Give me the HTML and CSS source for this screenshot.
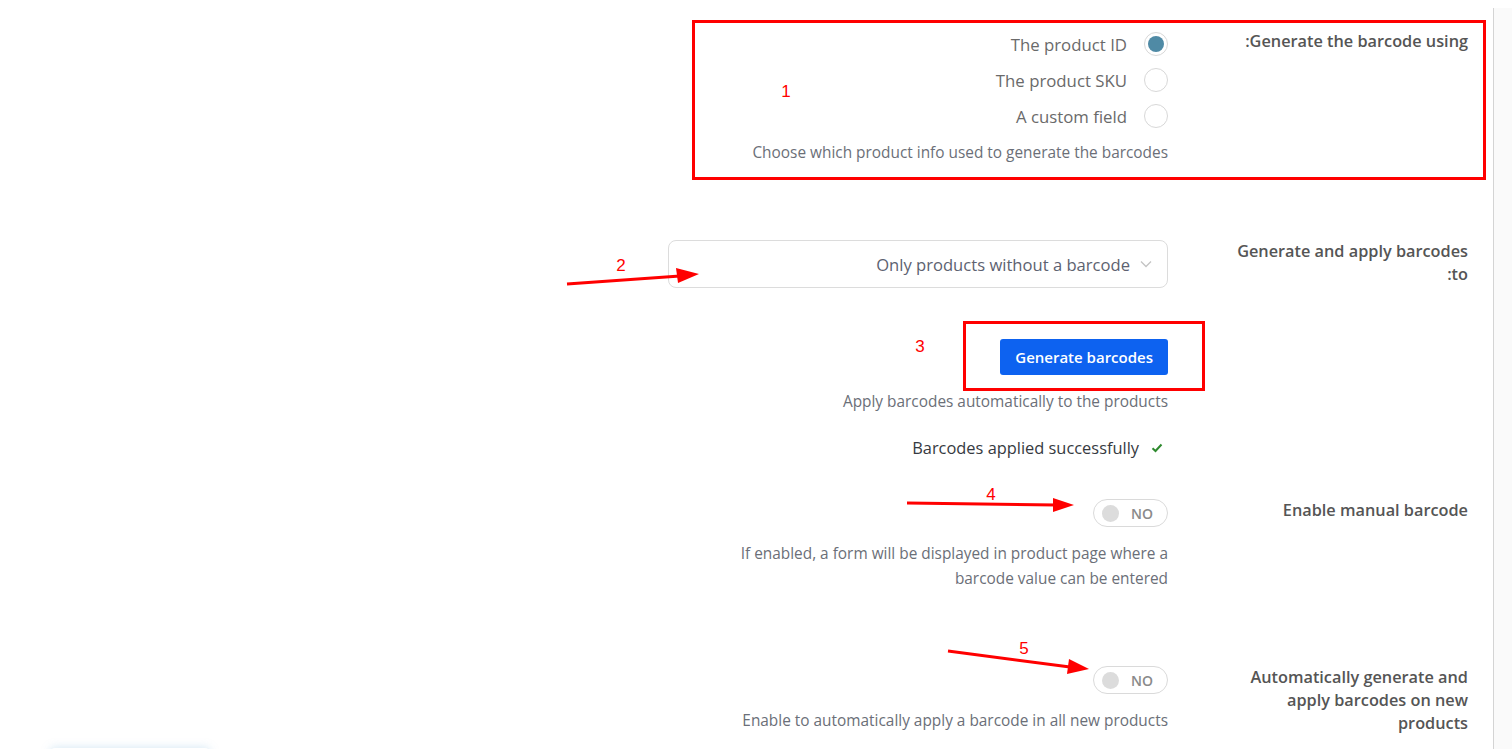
FILE: index.html
```html
<!DOCTYPE html>
<html lang="en">
<head>
  <meta charset="UTF-8">
  <meta name="viewport" content="width=device-width, initial-scale=1.0">
  <title>Barcode settings</title>
  <link rel="stylesheet" href="styles.css">
</head>
<body>
  <div class="page">
    <form class="form" dir="rtl">

      <!-- 1: source of the barcode -->
      <div class="row row-source">
        <div class="label label-top">Generate the barcode using:</div>
        <div class="control">
          <div class="radios">
            <label class="radio"><span class="dot checked"></span><span class="radio-text">The product ID</span></label>
            <label class="radio"><span class="dot"></span><span class="radio-text">The product SKU</span></label>
            <label class="radio"><span class="dot"></span><span class="radio-text">A custom field</span></label>
          </div>
          <p class="help help-first">Choose which product info used to generate the barcodes</p>
        </div>
      </div>

      <!-- 2: which products -->
      <div class="row row-apply">
        <div class="label">Generate and apply barcodes to:</div>
        <div class="control">
          <div class="select">
            <svg class="chevron" width="12" height="8" viewBox="0 0 12 8"><path d="M1 1.5 L6 6.5 L11 1.5" fill="none" stroke="#c4c4c4" stroke-width="1.3"/></svg>
            <span>Only products without a barcode</span>
          </div>
        </div>
      </div>

      <!-- 3: button -->
      <div class="row row-button">
        <div class="label"></div>
        <div class="control">
          <button type="button" class="btn">Generate barcodes</button>
          <p class="help help-btn">Apply barcodes automatically to the products</p>
          <div class="success">
            <svg class="check" width="12" height="10" viewBox="0 0 12 10"><path d="M1.5 5.2 L4.5 8 L10.5 1.5" fill="none" stroke="#2f8a2f" stroke-width="2"/></svg>
            <span>Barcodes applied successfully</span>
          </div>
        </div>
      </div>

      <!-- 4: manual barcode -->
      <div class="row row-manual">
        <div class="label">Enable manual barcode</div>
        <div class="control">
          <div class="switch"><span class="knob"></span><span class="switch-text">NO</span></div>
          <p class="help help-switch">If enabled, a form will be displayed in product page where a barcode value can be entered</p>
        </div>
      </div>

      <!-- 5: auto barcode -->
      <div class="row row-auto">
        <div class="label">Automatically generate and apply barcodes on new products</div>
        <div class="control">
          <div class="switch"><span class="knob"></span><span class="switch-text">NO</span></div>
          <p class="help help-switch">Enable to automatically apply a barcode in all new products</p>
        </div>
      </div>

    </form>
  </div>
  <div class="side"></div>

  <div class="glow"></div>

  <!-- annotations drawn over the screenshot -->
  <svg class="notes" width="1512" height="749" viewBox="0 0 1512 749">
    <rect x="693.5" y="21.5" width="791" height="157" fill="none" stroke="#f00" stroke-width="3"/>
    <rect x="964.5" y="322.5" width="239" height="67" fill="none" stroke="#f00" stroke-width="3"/>

    <line x1="567" y1="284" x2="680" y2="276" stroke="#f00" stroke-width="3"/>
    <polygon points="699,274 676,268 678,283" fill="#f00"/>

    <line x1="907" y1="503" x2="1056" y2="505" stroke="#f00" stroke-width="3"/>
    <polygon points="1074,505 1053,498 1053,512" fill="#f00"/>

    <line x1="948" y1="651" x2="1070" y2="667" stroke="#f00" stroke-width="3"/>
    <polygon points="1089,669 1069,659 1067,674" fill="#f00"/>

    <text x="786" y="97" class="note-num">1</text>
    <text x="621" y="271" class="note-num">2</text>
    <text x="920" y="352" class="note-num">3</text>
    <text x="991" y="500" class="note-num">4</text>
    <text x="1024" y="654" class="note-num">5</text>
  </svg>
</body>
</html>
```

FILE: styles.css
```css
/* reset */
*{
  margin: 0;
  padding: 0;
  box-sizing: border-box;
}
body{
  display: flex;
  min-height: 749px;
  background: #fff;
  font-family: "Open Sans", "Noto Sans", sans-serif;
  overflow: hidden;
  position: relative;
}
.page{
  flex: 1;
  padding-right: 25px;
}
/* grey strip on the far right */
.side{
  width: 19px;
  margin-top: 8px;
  border-left: 1px solid #d4d4d4;
  background: #fafafa;
}

/* form rows: label on the right, control on the left */
.form{
  padding-top: 26px;
}
.row{
  display: flex;
  gap: 65px;
}
.label{
  width: 235px;
  flex: none;
  font-size: 16.3px;
  font-weight: 600;
  line-height: 23px;
  color: #555;
}
.label-top{
  padding-top: 4px;
}
.control{
  width: 500px;
  flex: none;
  display: flex;
  flex-direction: column;
  align-items: flex-start;
}

.row-apply{ margin-top: 75px; }
.row-button{ margin-top: 51px; }
.row-manual{ margin-top: 40px; }
.row-auto{ margin-top: 75px; }

/* radios */
.radios{
  display: flex;
  flex-direction: column;
}
.radio{
  display: flex;
  align-items: center;
  gap: 17px;
  height: 36px;
  font-size: 16.8px;
  color: #6a6a6a;
}
.dot{
  width: 24px;
  height: 24px;
  border: 1px solid #d8d8d8;
  border-radius: 50%;
  display: flex;
  align-items: center;
  justify-content: center;
}
.dot.checked::after{
  content: "";
  width: 16px;
  height: 16px;
  border-radius: 50%;
  background: #4f8aa5;
}

/* help texts */
.help{
  font-size: 15.4px;
  line-height: 25px;
  color: #6b6f78;
  max-width: 470px;
}
.help-first{ margin-top: 6px; }
.help-btn{ margin-top: 14px; }
.help-switch{ margin-top: 14px; }

/* select */
.select{
  width: 500px;
  height: 48px;
  border: 1px solid #dcdcdc;
  border-radius: 8px;
  display: flex;
  align-items: center;
  gap: 10px;
  padding-right: 15px;
  font-size: 16.6px;
  color: #5d6270;
}

/* button */
.btn{
  height: 36px;
  padding: 0 15px;
  border: none;
  border-radius: 3px;
  background: #0d62f0;
  color: #fff;
  font-family: "Open Sans", sans-serif;
  font-size: 15px;
  font-weight: 600;
}

.success{
  margin-top: 23px;
  display: flex;
  align-items: center;
  gap: 12px;
  font-size: 16.4px;
  line-height: 22px;
  color: #363a41;
}
.check{
  margin-right: 5px;
}

/* yes / no switch */
.switch{
  width: 75px;
  height: 28px;
  border: 1px solid #dadada;
  border-radius: 14px;
  display: flex;
  flex-direction: row-reverse;
  align-items: center;
  justify-content: space-between;
  padding: 0 14px 0 8px;
}
.knob{
  width: 17px;
  height: 17px;
  border-radius: 50%;
  background: #dcdcdc;
}
.switch-text{
  font-size: 14px;
  font-weight: 600;
  color: #8a8a8a;
}

/* faint glow at the bottom left */
.glow{
  position: absolute;
  left: 50px;
  top: 748px;
  width: 160px;
  height: 10px;
  border-radius: 6px;
  box-shadow: 0 0 10px rgba(120, 180, 220, 0.35);
}

/* red annotations */
.notes{
  position: absolute;
  left: 0;
  top: 0;
  pointer-events: none;
}
.note-num{
  fill: #f00;
  font-family: "Liberation Sans", sans-serif;
  font-size: 17px;
  text-anchor: middle;
}
```
